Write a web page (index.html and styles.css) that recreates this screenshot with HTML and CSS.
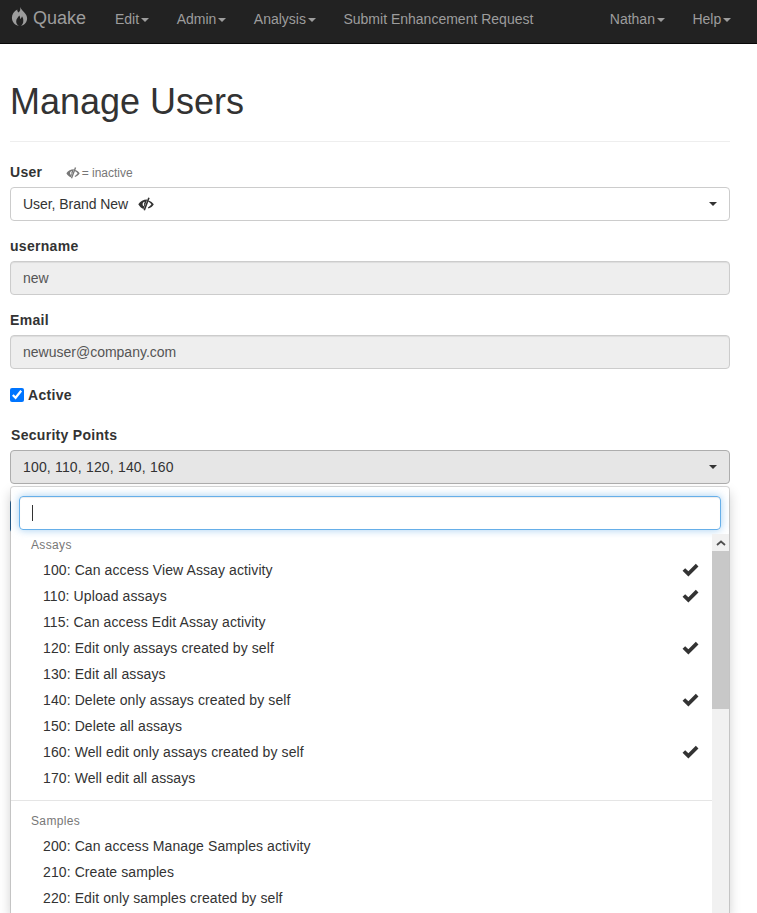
FILE: index.html
```html
<!DOCTYPE html>
<html lang="en">
<head>
    <meta charset="UTF-8">
    <meta name="viewport" content="width=device-width, initial-scale=1.0">
    <title>Manage Users</title>
    <link rel="stylesheet" href="styles.css">
</head>
<body>
    <svg class="icon-defs" width="0" height="0">
        <symbol id="eye-off" viewBox="0 0 16 14">
            <path fill-rule="evenodd" d="M0.300 7.300C2.300 4.200 5.300 2.500 9.200 2.500L5.600 12C3.400 11.300 1.600 9.600 0.300 7.300ZM6.800 4.800C5.500 5 4.600 6 4.600 7.200C4.600 8 5 8.800 5.700 9.200L6.300 7.600C6 7.300 5.900 7 6 6.700Z"/>
            <path d="M10.200 0.400L11.700 1L7 13.500L5.500 12.900Z"/>
            <path d="M10.600 3.400C12.800 4.100 14.600 5.500 15.800 7.300C14.600 9.300 12.800 10.900 10.400 11.600L9.900 10.400C11.500 9.700 12.500 8.700 13.400 7.300C12.600 6.100 11.500 5.200 10.100 4.600Z"/>
        </symbol>
        <symbol id="check" viewBox="0 0 16 13">
            <path d="M0.500 7.300L3 4.800L6 7.700L13 0.700L15.500 3.200L6 12.700Z"/>
        </symbol>
    </svg>

    <nav class="navbar">
        <a class="brand">
            <svg class="flame" viewBox="0 0 16 19"><path fill-rule="evenodd" d="M8.500 0C9.400 2.600 8.500 4 7 5.600C6 4.600 5.600 3.600 5.800 2.600C2.500 4.500 0.400 7.400 0.400 10.800C0.400 15.200 3.600 18.400 7.400 18.800C5.600 17.800 4.700 16.300 4.700 14.500C4.700 12.300 6.200 10.800 7.800 8.600C8.500 9.800 8.800 10.700 8.500 12C9.700 11.400 10.300 10.500 10.500 9.300C11.600 10.900 11.800 12.300 11.800 13.900C11.800 16 11 17.700 9.200 18.800C13 18.300 15.600 15.300 15.600 11.300C15.600 6.800 11.200 4.800 8.500 0Z"/></svg>
            Quake
        </a>
        <ul class="nav-links">
            <li><a>Edit<span class="caret"></span></a></li>
            <li><a>Admin<span class="caret"></span></a></li>
            <li><a>Analysis<span class="caret"></span></a></li>
            <li><a>Submit Enhancement Request</a></li>
        </ul>
        <ul class="nav-links nav-right">
            <li><a>Nathan<span class="caret"></span></a></li>
            <li><a>Help<span class="caret"></span></a></li>
        </ul>
    </nav>

    <div class="container">
        <h1 class="page-title">Manage Users</h1>

        <div class="user-label">
            <label>User</label>
            <span class="inactive-note"><svg class="eye"><use href="#eye-off"/></svg> = inactive</span>
        </div>
        <div class="select-btn">
            <span class="user-value">User, Brand New <svg class="eye eye-dark"><use href="#eye-off"/></svg></span>
            <span class="caret"></span>
        </div>

        <label class="field-label">username</label>
        <div class="text-input">new</div>

        <label class="field-label">Email</label>
        <div class="text-input">newuser@company.com</div>

        <div class="check-row">
            <input type="checkbox" id="active" checked>
            <label for="active">Active</label>
        </div>

        <label class="field-label points-label">Security Points</label>
        <div class="points-wrap">
            <div class="select-btn select-open">
                <span class="points-value">100, 110, 120, 140, 160</span>
                <span class="caret"></span>
            </div>
            <button class="save-btn">Save</button>

            <div class="dropdown">
                <div class="search-box"><span class="cursor"></span></div>
                <div class="list-wrap">
                    <ul class="option-list">
                        <li class="group-head">Assays</li>
                        <li class="option">100: Can access View Assay activity<svg class="check"><use href="#check"/></svg></li>
                        <li class="option">110: Upload assays<svg class="check"><use href="#check"/></svg></li>
                        <li class="option">115: Can access Edit Assay activity</li>
                        <li class="option">120: Edit only assays created by self<svg class="check"><use href="#check"/></svg></li>
                        <li class="option">130: Edit all assays</li>
                        <li class="option">140: Delete only assays created by self<svg class="check"><use href="#check"/></svg></li>
                        <li class="option">150: Delete all assays</li>
                        <li class="option">160: Well edit only assays created by self<svg class="check"><use href="#check"/></svg></li>
                        <li class="option">170: Well edit all assays</li>
                        <li class="divider"></li>
                        <li class="group-head">Samples</li>
                        <li class="option">200: Can access Manage Samples activity</li>
                        <li class="option">210: Create samples</li>
                        <li class="option">220: Edit only samples created by self</li>
                    </ul>
                    <div class="scrollbar">
                        <div class="scroll-up"><svg viewBox="0 0 10 6"><path d="M1 5L5 1.500L9 5" fill="none" stroke="#505050" stroke-width="1.800"/></svg></div>
                        <div class="scroll-thumb"></div>
                    </div>
                </div>
            </div>
        </div>
    </div>
</body>
</html>
```

FILE: styles.css
```css
html, body {
    height: 913px;
    overflow: hidden;
}

body {
    margin: 0;
    font-family: "Liberation Sans", Arial, sans-serif;
    font-size: 14px;
    line-height: 20px;
    color: #333;
    background-color: #fff;
}

.icon-defs {
    display: block;
    height: 0;
}

.navbar {
    display: flex;
    align-items: center;
    height: 43px;
    background-color: #222;
    border-bottom: 1px solid #080808;
    color: #9d9d9d;
}

.brand {
    display: flex;
    align-items: center;
    width: 101.250px;
    margin-top: -8px;
    padding-left: 11px;
    box-sizing: border-box;
    font-size: 18px;
}

.flame {
    width: 17px;
    height: 19px;
    margin-right: 5px;
    margin-top: -3px;
    fill: #9d9d9d;
}

.nav-links {
    display: flex;
    list-style: none;
    margin: -6px 0 0;
    padding: 0;
}

.nav-links li {
    padding: 0 13.750px;
}

.nav-right {
    margin-left: auto;
    margin-right: 12px;
}

.caret {
    display: inline-block;
    width: 0;
    height: 0;
    margin-left: 2px;
    vertical-align: middle;
    border-top: 4px solid;
    border-right: 4px solid transparent;
    border-left: 4px solid transparent;
}

.container {
    padding: 0 27px 0 10px;
}

.page-title {
    margin: 0 0 20px;
    padding: 38px 0 20px;
    border-bottom: 1px solid #eee;
    font-size: 36px;
    font-weight: 500;
    line-height: 39px;
}

.user-label {
    display: flex;
    align-items: center;
    height: 20px;
    margin-bottom: 5px;
}

label {
    font-weight: bold;
    letter-spacing: .3px;
}

.inactive-note {
    margin-top: 2px;
    margin-left: 24px;
    font-size: 12px;
    color: #777;
}

.eye {
    width: 14px;
    height: 12px;
    margin-right: -2px;
    fill: #777;
    vertical-align: -2px;
}

.user-value {
    letter-spacing: -.05px;
}

.eye-dark {
    width: 16px;
    height: 14px;
    margin-left: 6px;
    margin-right: 0;
    fill: #333;
}

.select-btn {
    display: flex;
    align-items: center;
    justify-content: space-between;
    height: 34px;
    box-sizing: border-box;
    padding: 0 12px;
    border: 1px solid #ccc;
    border-radius: 4px;
    background-color: #fff;
}

.select-open {
    background-color: #e6e6e6;
    border-color: #adadad;
}

.points-value {
    letter-spacing: .17px;
}

.field-label {
    display: block;
    margin-top: 15px;
    margin-bottom: 5px;
}

.text-input {
    height: 34px;
    box-sizing: border-box;
    padding: 6px 12px;
    border: 1px solid #ccc;
    border-radius: 4px;
    background-color: #eee;
    color: #555;
    box-shadow: inset 0 1px 1px rgba(0, 0, 0, .075);
}

.check-row {
    display: flex;
    align-items: center;
    margin-top: 16px;
    height: 20px;
}

.check-row input {
    width: 14px;
    height: 14px;
    margin: 0 4px 0 0;
}

.points-label {
    margin-top: 20px;
    padding-left: 1px;
}

.points-wrap {
    position: relative;
}

.save-btn {
    display: block;
    width: 60px;
    height: 34px;
    margin-top: 15px;
    border: 1px solid #2e6da4;
    border-radius: 4px;
    background-color: #337ab7;
    color: #fff;
    font-family: inherit;
    font-size: 14px;
}

.dropdown {
    position: absolute;
    top: 36px;
    left: 0;
    right: 0;
    display: flex;
    flex-direction: column;
    height: 427px;
    box-sizing: border-box;
    padding-top: 9px;
    border: 1px solid rgba(0, 0, 0, .15);
    border-bottom: 0;
    border-radius: 4px 4px 0 0;
    background-color: #fff;
    background-clip: padding-box;
    box-shadow: 0 6px 12px rgba(0, 0, 0, .175);
}

.search-box {
    display: flex;
    align-items: center;
    flex: none;
    height: 34px;
    box-sizing: border-box;
    margin: 0 8px 4px;
    padding: 0 12px;
    border: 1px solid #66afe9;
    border-radius: 4px;
    box-shadow: inset 0 1px 1px rgba(0, 0, 0, .075), 0 0 8px rgba(102, 175, 233, .6);
}

.cursor {
    width: 1px;
    height: 16px;
    background-color: #333;
}

.list-wrap {
    display: flex;
    flex: 1;
    min-height: 0;
}

.option-list {
    flex: 1;
    list-style: none;
    margin: 0;
    padding: 0;
    overflow: hidden;
}

.group-head {
    padding: 3px 20px;
    font-size: 12px;
    line-height: 17px;
    letter-spacing: .35px;
    color: #777;
}

.option {
    display: flex;
    align-items: center;
    justify-content: space-between;
    height: 26px;
    padding: 0 13px 0 32px;
    letter-spacing: .1px;
}

.check {
    width: 17px;
    height: 14px;
    fill: #333;
}

.divider {
    height: 1px;
    margin: 9px 0;
    background-color: #e5e5e5;
}

.scrollbar {
    width: 17px;
    background-color: #f1f1f1;
}

.scroll-up {
    display: flex;
    align-items: center;
    justify-content: center;
    height: 17px;
}

.scroll-up svg {
    width: 10px;
    height: 6px;
}

.scroll-thumb {
    height: 158px;
    background-color: #c8c8c8;
}
```
